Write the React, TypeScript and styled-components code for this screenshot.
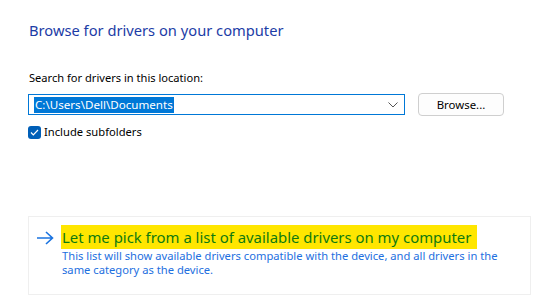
import styled, { createGlobalStyle } from 'styled-components';

const GlobalStyle = createGlobalStyle`
  body {
    margin: 0;
    background: #ffffff;
    font-family: 'Noto Sans', 'Open Sans', sans-serif;
  }
`;

const ScPage = styled.div`
  width: 551px;
  height: 307px;
  box-sizing: border-box;
  padding: 19px 20px 0 28px;
  display: flex;
  flex-direction: column;
`;

const ScTitle = styled.h1`
  margin: 0;
  font-size: 14.7px;
  font-weight: 400;
  line-height: 22px;
  color: #1c3ca6;
  padding-left: 1px;
`;

const ScLabel = styled.div`
  margin-top: 29px;
  padding-left: 1px;
  font-size: 11.1px;
  line-height: 16px;
  color: #000000;
`;

const ScRow = styled.div`
  margin-top: 7px;
  display: flex;
  align-items: center;
  gap: 13px;
`;

const ScCombo = styled.div`
  width: 377px;
  height: 21px;
  box-sizing: border-box;
  border: 1px solid #0078d7;
  display: flex;
  align-items: center;
  padding: 0 6px 0 5px;
`;

const ScSelected = styled.span`
  background: #0078d7;
  color: #ffffff;
  font-size: 11.6px;
  line-height: 16px;
  padding: 0 1px;
`;

const ScChevron = styled.svg`
  margin-left: auto;
  width: 10px;
  height: 6px;
`;

const ScButton = styled.button`
  width: 86px;
  height: 23px;
  border: 1px solid #cfcfcf;
  border-radius: 4px;
  background: #fdfdfd;
  font-family: inherit;
  font-size: 11.4px;
  color: #000000;
  padding: 0;
`;

const ScCheckRow = styled.label`
  margin-top: 8px;
  display: flex;
  align-items: center;
  gap: 3px;
  font-size: 11.2px;
  line-height: 16px;
  color: #000000;
`;

const ScBox = styled.span`
  width: 13px;
  height: 13px;
  border-radius: 3px;
  background: #005fb8;
  display: flex;
  align-items: center;
  justify-content: center;
`;

const ScCard = styled.div`
  margin-top: 76px;
  width: 503px;
  height: 79px;
  box-sizing: border-box;
  border: 1px solid #efefef;
  padding: 8px 10px 0 7px;
  display: grid;
  grid-template-columns: 25px auto;
`;

const ScArrow = styled.svg`
  width: 18px;
  height: 14px;
  margin-top: 6px;
`;

const ScOption = styled.div`
  display: flex;
  flex-direction: column;
  align-items: flex-start;
`;

const ScOptionTitle = styled.div`
  font-size: 14.9px;
  line-height: 24px;
  color: #0f7a0f;
  background: #ffe600;
  padding: 0 6px 0 1px;
  white-space: nowrap;
`;

const ScOptionText = styled.div`
  font-size: 11.2px;
  line-height: 14px;
  color: #1d6fe0;
  padding-left: 1px;
  white-space: nowrap;
`;

export default function App() {
  return (
    <>
      <GlobalStyle />
      <ScPage>
        <ScTitle>Browse for drivers on your computer</ScTitle>
        <ScLabel>Search for drivers in this location:</ScLabel>
        <ScRow>
          <ScCombo>
            <ScSelected>C:\Users\Dell\Documents</ScSelected>
            <ScChevron viewBox="0 0 10 6">
              <path d="M0.5 0.5 L5 5 L9.5 0.5" fill="none" stroke="#555" strokeWidth="1" />
            </ScChevron>
          </ScCombo>
          <ScButton>Browse...</ScButton>
        </ScRow>
        <ScCheckRow>
          <ScBox>
            <svg width="9" height="7" viewBox="0 0 9 7">
              <path d="M1 3.5 L3.3 5.8 L8 1" fill="none" stroke="#fff" strokeWidth="1.2" />
            </svg>
          </ScBox>
          Include subfolders
        </ScCheckRow>
        <ScCard>
          <ScArrow viewBox="0 0 18 14">
            <path d="M1 7 H16 M10 1 L16.5 7 L10 13" fill="none" stroke="#1a73e0" strokeWidth="1.6" />
          </ScArrow>
          <ScOption>
            <ScOptionTitle>Let me pick from a list of available drivers on my computer</ScOptionTitle>
            <ScOptionText>
              This list will show available drivers compatible with the device, and all drivers in the
              <br />
              same category as the device.
            </ScOptionText>
          </ScOption>
        </ScCard>
      </ScPage>
    </>
  );
}
